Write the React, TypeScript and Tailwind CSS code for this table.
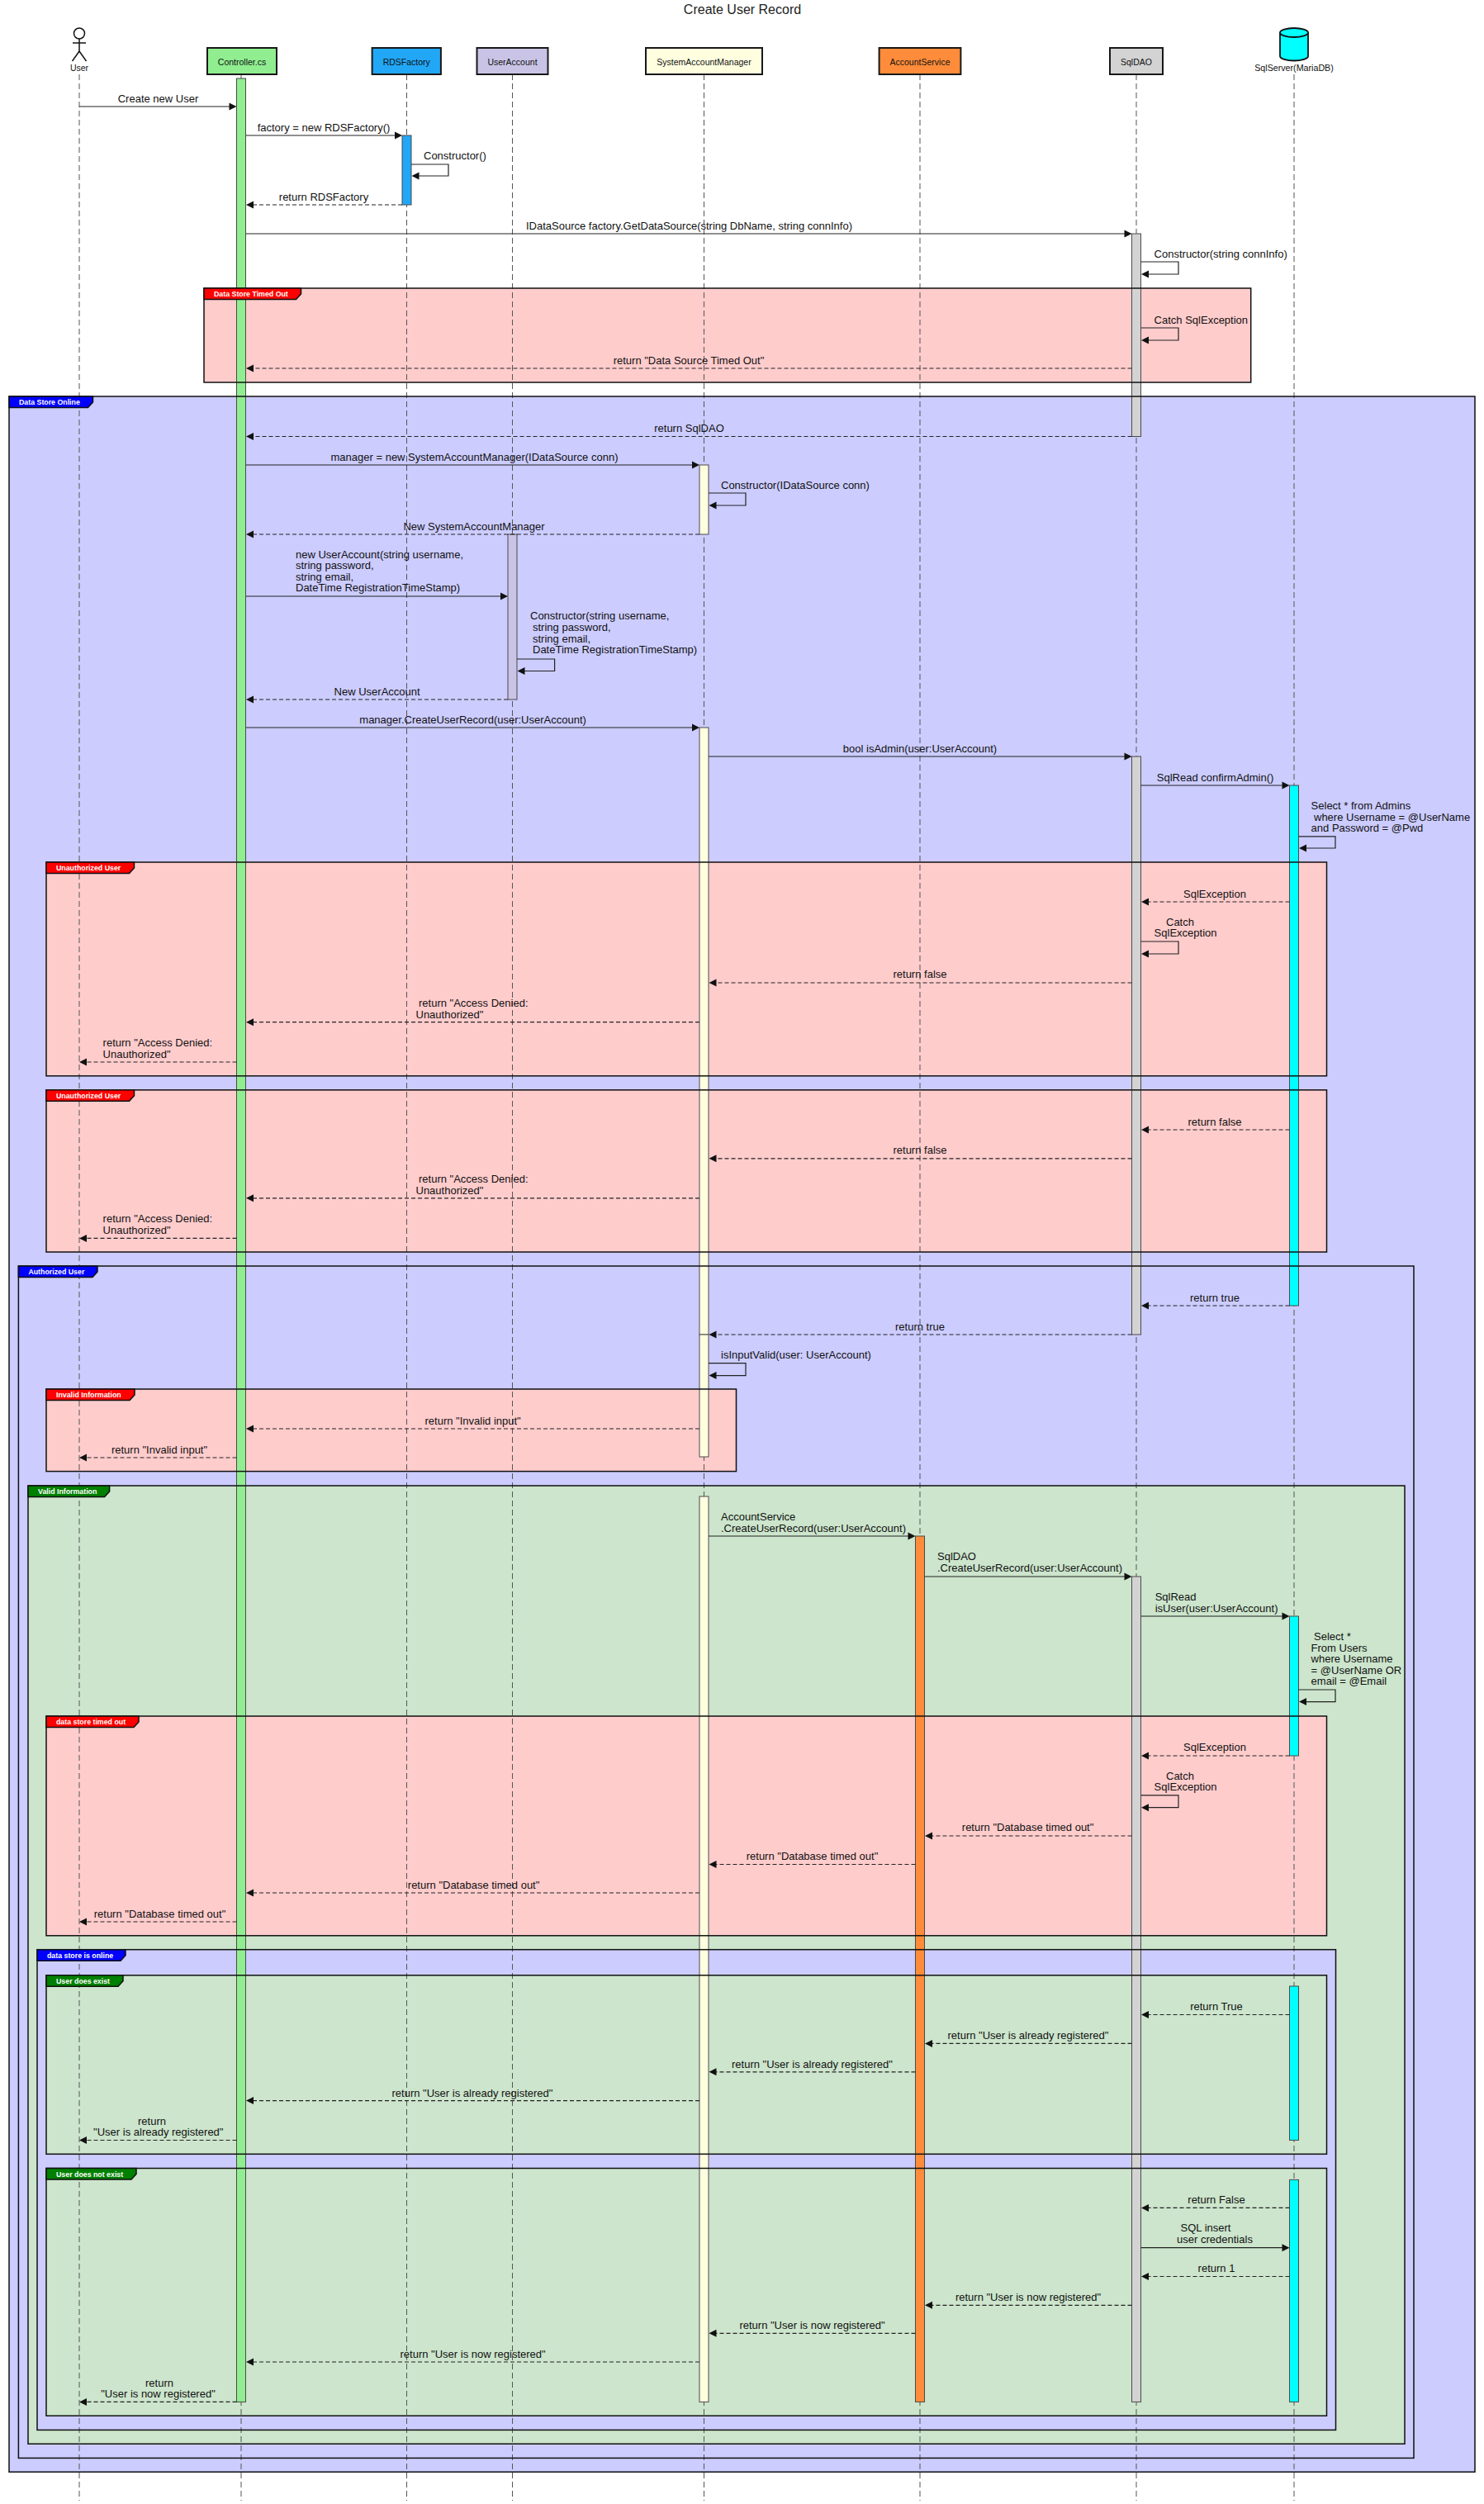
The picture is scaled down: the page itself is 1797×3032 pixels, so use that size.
import React from 'react';

const PINK = '#FFCCCC', BLUE = '#CCCCFF', GREEN = '#CCE5CC', RED = '#FF0000', BTAB = '#0000FF', GTAB = '#008000';

type Frame = [number, number, number, number, string, number, string, string];
const frames: Frame[] = [
  [247, 1514.7, 349, 463, PINK, 117.5, RED, 'Data Store Timed Out'],
  [11, 1786, 480, 2993.2, BLUE, 101.5, BTAB, 'Data Store Online'],
  [56, 1606.5, 1044, 1302.8, PINK, 106.5, RED, 'Unauthorized User'],
  [56, 1606.5, 1319.8, 1516, PINK, 106.5, RED, 'Unauthorized User'],
  [22.4, 1712, 1533, 2976.4, BLUE, 95.6, BTAB, 'Authorized User'],
  [56, 891.5, 1682, 1781.6, PINK, 107, RED, 'Invalid Information'],
  [34, 1701, 1799, 2959.2, GREEN, 98.6, GTAB, 'Valid Information'],
  [56, 1606.5, 2078, 2343.8, PINK, 112, RED, 'data store timed out'],
  [45, 1617.5, 2360.7, 2942.4, BLUE, 107, BTAB, 'data store is online'],
  [56, 1606.5, 2391.8, 2608.3, GREEN, 93, GTAB, 'User does exist'],
  [56, 1606.5, 2625.5, 2925.2, GREEN, 109, GTAB, 'User does not exist'],
];

const CG = '#90EE90', RB = '#22A7F7', UAC = '#C9C4E6', SY = '#FFFFE0', AO = '#FF8C3A', DG = '#D3D3D3', CY = '#00FFFF';

type Bar = [number, number, number, string];
const bars: Bar[] = [
  [286.5, 95, 2908.4, CG],
  [487, 164, 248, RB],
  [1370.5, 283, 528.5, DG],
  [847, 563, 647, SY],
  [615, 647, 847, UAC],
  [847, 881, 1616, SY],
  [1370.5, 916, 1616, DG],
  [1561.5, 951, 1581, CY],
  [847, 1616, 1764, SY],
  [847, 1812, 2908.4, SY],
  [1108.5, 1860, 2908.4, AO],
  [1370.5, 1909, 2908.4, DG],
  [1561.5, 1957, 2126, CY],
  [1561.5, 2405, 2591.5, CY],
  [1561.5, 2639.4, 2908.4, CY],
];

type M = [number, number, number, boolean];
const msgs: M[] = [
  [96, 286.5, 129, false],
  [298, 487, 164, false],
  [487, 298, 248, true],
  [298, 1370.5, 283, false],
  [1370.5, 298, 446, true],
  [1370.5, 298, 528.5, true],
  [298, 847, 563, false],
  [847, 298, 647, true],
  [298, 615, 722, false],
  [615, 298, 847, true],
  [298, 847, 881, false],
  [858, 1370.5, 916, false],
  [1381.5, 1561.5, 951, false],
  [1561.5, 1382, 1092, true],
  [1370.5, 858.5, 1190, true],
  [847, 298, 1237.7, true],
  [286.5, 96, 1286, true],
  [1561.5, 1382, 1368, true],
  [1370.5, 858.5, 1402.8, true],
  [847, 298, 1450.8, true],
  [286.5, 96, 1499.4, true],
  [1561.5, 1382, 1581, true],
  [1370.5, 858.5, 1616, true],
  [847, 298, 1730, true],
  [286.5, 96, 1765, true],
  [858, 1108.5, 1860, false],
  [1119.5, 1370.5, 1909, false],
  [1381.5, 1561.5, 1957, false],
  [1561.5, 1382, 2126, true],
  [1370.5, 1120, 2223, true],
  [1108.5, 858.5, 2257.5, true],
  [847, 298, 2292, true],
  [286.5, 96, 2327, true],
  [1561.5, 1382, 2439.5, true],
  [1370.5, 1120, 2474.4, true],
  [1108.5, 858.5, 2508.8, true],
  [847, 298, 2543.6, true],
  [286.5, 96, 2591.5, true],
  [1561.5, 1382, 2673.4, true],
  [1381.5, 1561.5, 2721.7, false],
  [1561.5, 1382, 2756.5, true],
  [1370.5, 1120, 2791.3, true],
  [1108.5, 858.5, 2825.3, true],
  [847, 298, 2860, true],
  [286.5, 96, 2908.4, true],
];

type S = [number, number, number, number];
const selfs: S[] = [
  [498, 199, 213, 543],
  [1381.5, 317, 332, 1427],
  [1381.5, 397, 412, 1427],
  [858, 597, 612, 903],
  [626, 798, 812.5, 671.6],
  [1572.5, 1012.8, 1027, 1617],
  [1381.5, 1140, 1155, 1427],
  [858, 1650.7, 1665.6, 903],
  [1572.5, 2046, 2060.6, 1617],
  [1381.5, 2173.8, 2188.7, 1427],
];

type Tx = [number, number, string, boolean?];
const texts: Tx[] = [
  [191.5, 124, 'Create new User', true],
  [392, 159, 'factory = new RDSFactory()', true],
  [513, 193, 'Constructor()'],
  [392, 243, 'return RDSFactory', true],
  [834.5, 278, 'IDataSource factory.GetDataSource(string DbName, string connInfo)', true],
  [1397.6, 312, 'Constructor(string connInfo)'],
  [1397.6, 392, 'Catch SqlException'],
  [834, 441, 'return "Data Source Timed Out"', true],
  [834.5, 523, 'return SqlDAO', true],
  [574.5, 558, 'manager = new SystemAccountManager(IDataSource conn)', true],
  [873, 592, 'Constructor(IDataSource conn)'],
  [574, 642, 'New SystemAccountManager', true],
  [358, 675.5, 'new UserAccount(string username,'],
  [358, 689, 'string password,'],
  [358, 702.5, 'string email,'],
  [358, 716, 'DateTime RegistrationTimeStamp)'],
  [642, 750, 'Constructor(string username,'],
  [645, 764, 'string password,'],
  [645, 777.7, 'string email,'],
  [645, 791, 'DateTime RegistrationTimeStamp)'],
  [456.6, 842, 'New UserAccount', true],
  [572.6, 876, 'manager.CreateUserRecord(user:UserAccount)', true],
  [1114, 911, 'bool isAdmin(user:UserAccount)', true],
  [1471.6, 946, 'SqlRead confirmAdmin()', true],
  [1587.6, 980, 'Select * from Admins'],
  [1591, 993.5, 'where Username = @UserName'],
  [1587.6, 1007, 'and Password = @Pwd'],
  [1471, 1087, 'SqlException', true],
  [1412, 1121, 'Catch'],
  [1397.6, 1134, 'SqlException'],
  [1114, 1184, 'return false', true],
  [507, 1218.7, 'return "Access Denied:'],
  [503.5, 1232.8, 'Unauthorized"'],
  [124.6, 1267, 'return "Access Denied:'],
  [124.6, 1281, 'Unauthorized"'],
  [1471, 1363, 'return false', true],
  [1114, 1397, 'return false', true],
  [507, 1431.8, 'return "Access Denied:'],
  [503.5, 1446, 'Unauthorized"'],
  [124.6, 1480, 'return "Access Denied:'],
  [124.6, 1494, 'Unauthorized"'],
  [1471, 1576, 'return true', true],
  [1114, 1611, 'return true', true],
  [873, 1645, 'isInputValid(user: UserAccount)'],
  [572.6, 1725, 'return "Invalid input"', true],
  [193, 1760, 'return "Invalid input"', true],
  [873, 1841, 'AccountService'],
  [873, 1854.5, '.CreateUserRecord(user:UserAccount)'],
  [1135, 1889, 'SqlDAO'],
  [1135, 1903, '.CreateUserRecord(user:UserAccount)'],
  [1398.7, 1937.5, 'SqlRead'],
  [1398.7, 1951.5, 'isUser(user:UserAccount)'],
  [1591, 1985.5, 'Select *'],
  [1587.6, 1999.6, 'From Users'],
  [1587.6, 2013, 'where Username'],
  [1587.6, 2026.6, '= @UserName OR'],
  [1587.6, 2040, 'email = @Email'],
  [1471, 2120, 'SqlException', true],
  [1412, 2155, 'Catch'],
  [1397.6, 2168, 'SqlException'],
  [1244.6, 2217, 'return "Database timed out"', true],
  [983.5, 2252, 'return "Database timed out"', true],
  [573.6, 2287, 'return "Database timed out"', true],
  [193.5, 2322, 'return "Database timed out"', true],
  [1473, 2434, 'return True', true],
  [1245, 2469, 'return "User is already registered"', true],
  [983.5, 2503.5, 'return "User is already registered"', true],
  [572, 2538.5, 'return "User is already registered"', true],
  [184, 2572.6, 'return', true],
  [191.8, 2585.7, '"User is already registered"', true],
  [1473, 2668, 'return False', true],
  [1460, 2702, 'SQL insert', true],
  [1471, 2716.4, 'user credentials', true],
  [1473, 2751, 'return 1', true],
  [1245, 2786, 'return "User is now registered"', true],
  [983.5, 2820, 'return "User is now registered"', true],
  [572.6, 2855, 'return "User is now registered"', true],
  [193, 2889.6, 'return', true],
  [191.5, 2902.7, '"User is now registered"', true],
];

type P = [number, number, string, string];
const parts: P[] = [
  [251, 335, 'Controller.cs', CG],
  [450.6, 533.9, 'RDSFactory', RB],
  [577.5, 663.5, 'UserAccount', UAC],
  [782, 923, 'SystemAccountManager', SY],
  [1064.6, 1163.4, 'AccountService', AO],
  [1344, 1408, 'SqlDAO', DG],
];

const lifelines = [96, 292, 492.5, 620.5, 852.5, 1114, 1376, 1567];

export default function App() {
  return (
    <div className="w-[1797px] h-[3032px] bg-white overflow-hidden">
      <svg
        width={1797}
        height={3032}
        viewBox="0 0 1797 3032"
        className="block font-['Liberation_Sans',Arial,sans-serif]"
      >
        <rect x={0} y={0} width={1797} height={3032} fill="#ffffff" />
        <text x={899} y={17} fontSize={16} textAnchor="middle" fill="#222">
          Create User Record
        </text>

        {frames.map((f, i) => (
          <rect key={'ff' + i} x={f[0]} y={f[2]} width={f[1] - f[0]} height={f[3] - f[2]} fill={f[4]} />
        ))}

        {lifelines.map((x, i) => (
          <line key={'ll' + i} x1={x} y1={90} x2={x} y2={3028} stroke="#555" strokeWidth={1} strokeDasharray="7 4" />
        ))}

        {bars.map((b, i) => (
          <rect key={'b' + i} x={b[0]} y={b[1]} width={11} height={b[2] - b[1]} fill={b[3]} stroke="#4a4a4a" strokeWidth={1} />
        ))}

        {frames.map((f, i) => {
          const [x0, x1, y0, y1, , tw, tf, label] = f;
          const h = 13.5;
          return (
            <g key={'fb' + i}>
              <rect x={x0} y={y0} width={x1 - x0} height={y1 - y0} fill="none" stroke="#111" strokeWidth={1.5} />
              <polygon
                points={`${x0},${y0} ${x0 + tw},${y0} ${x0 + tw},${y0 + 7} ${x0 + tw - 6},${y0 + h} ${x0},${y0 + h}`}
                fill={tf}
                stroke="#111"
                strokeWidth={1.5}
              />
              <text x={x0 + 12} y={y0 + 10} fontSize={8.8} fontWeight={700} fill="#ffffff">
                {label}
              </text>
            </g>
          );
        })}

        {parts.map((p, i) => (
          <g key={'p' + i}>
            <rect x={p[0]} y={58} width={p[1] - p[0]} height={32} fill={p[3]} stroke="#181818" strokeWidth={2} />
            <text x={(p[0] + p[1]) / 2} y={79} fontSize={10.5} textAnchor="middle" fill="#111">
              {p[2]}
            </text>
          </g>
        ))}

        <g stroke="#111" strokeWidth={1.5} fill="none">
          <circle cx={96} cy={40.5} r={6.5} fill="#fff" />
          <line x1={96} y1={47} x2={96} y2={62} />
          <line x1={88} y1={52} x2={104} y2={52} />
          <line x1={96} y1={62} x2={87.5} y2={74} />
          <line x1={96} y1={62} x2={104.5} y2={74} />
        </g>
        <text x={96} y={86} fontSize={10.5} textAnchor="middle" fill="#111">
          User
        </text>

        <g stroke="#111" strokeWidth={1.8}>
          <path d="M1550,39.5 A17,5.5 0 0 1 1584,39.5 V68 A17,5.5 0 0 1 1550,68 Z" fill={CY} />
          <path d="M1550,39.5 A17,5.5 0 0 0 1584,39.5" fill="none" />
        </g>
        <text x={1567} y={85.5} fontSize={10.7} textAnchor="middle" fill="#111">
          SqlServer(MariaDB)
        </text>

        {msgs.map((m, i) => {
          const [x1, x2, y, dashed] = m;
          const dir = x2 > x1 ? 1 : -1;
          return (
            <g key={'m' + i}>
              <line
                x1={x1}
                y1={y}
                x2={x2 - dir * 3}
                y2={y}
                stroke="#222"
                strokeWidth={1.2}
                strokeDasharray={dashed ? '5 3' : undefined}
              />
              <polygon points={`${x2},${y} ${x2 - dir * 9},${y - 4.5} ${x2 - dir * 9},${y + 4.5}`} fill="#111" />
            </g>
          );
        })}

        {selfs.map((s, i) => {
          const [bx, y1, y2, rx] = s;
          return (
            <g key={'s' + i}>
              <path d={`M${bx},${y1} H${rx} V${y2} H${bx + 4}`} fill="none" stroke="#222" strokeWidth={1.2} />
              <polygon points={`${bx + 0.5},${y2} ${bx + 9.5},${y2 - 4.5} ${bx + 9.5},${y2 + 4.5}`} fill="#111" />
            </g>
          );
        })}

        {texts.map((t, i) => (
          <text key={'t' + i} x={t[0]} y={t[1]} fontSize={13} textAnchor={t[3] ? 'middle' : 'start'} fill="#111">
            {t[2]}
          </text>
        ))}
      </svg>
    </div>
  );
}
